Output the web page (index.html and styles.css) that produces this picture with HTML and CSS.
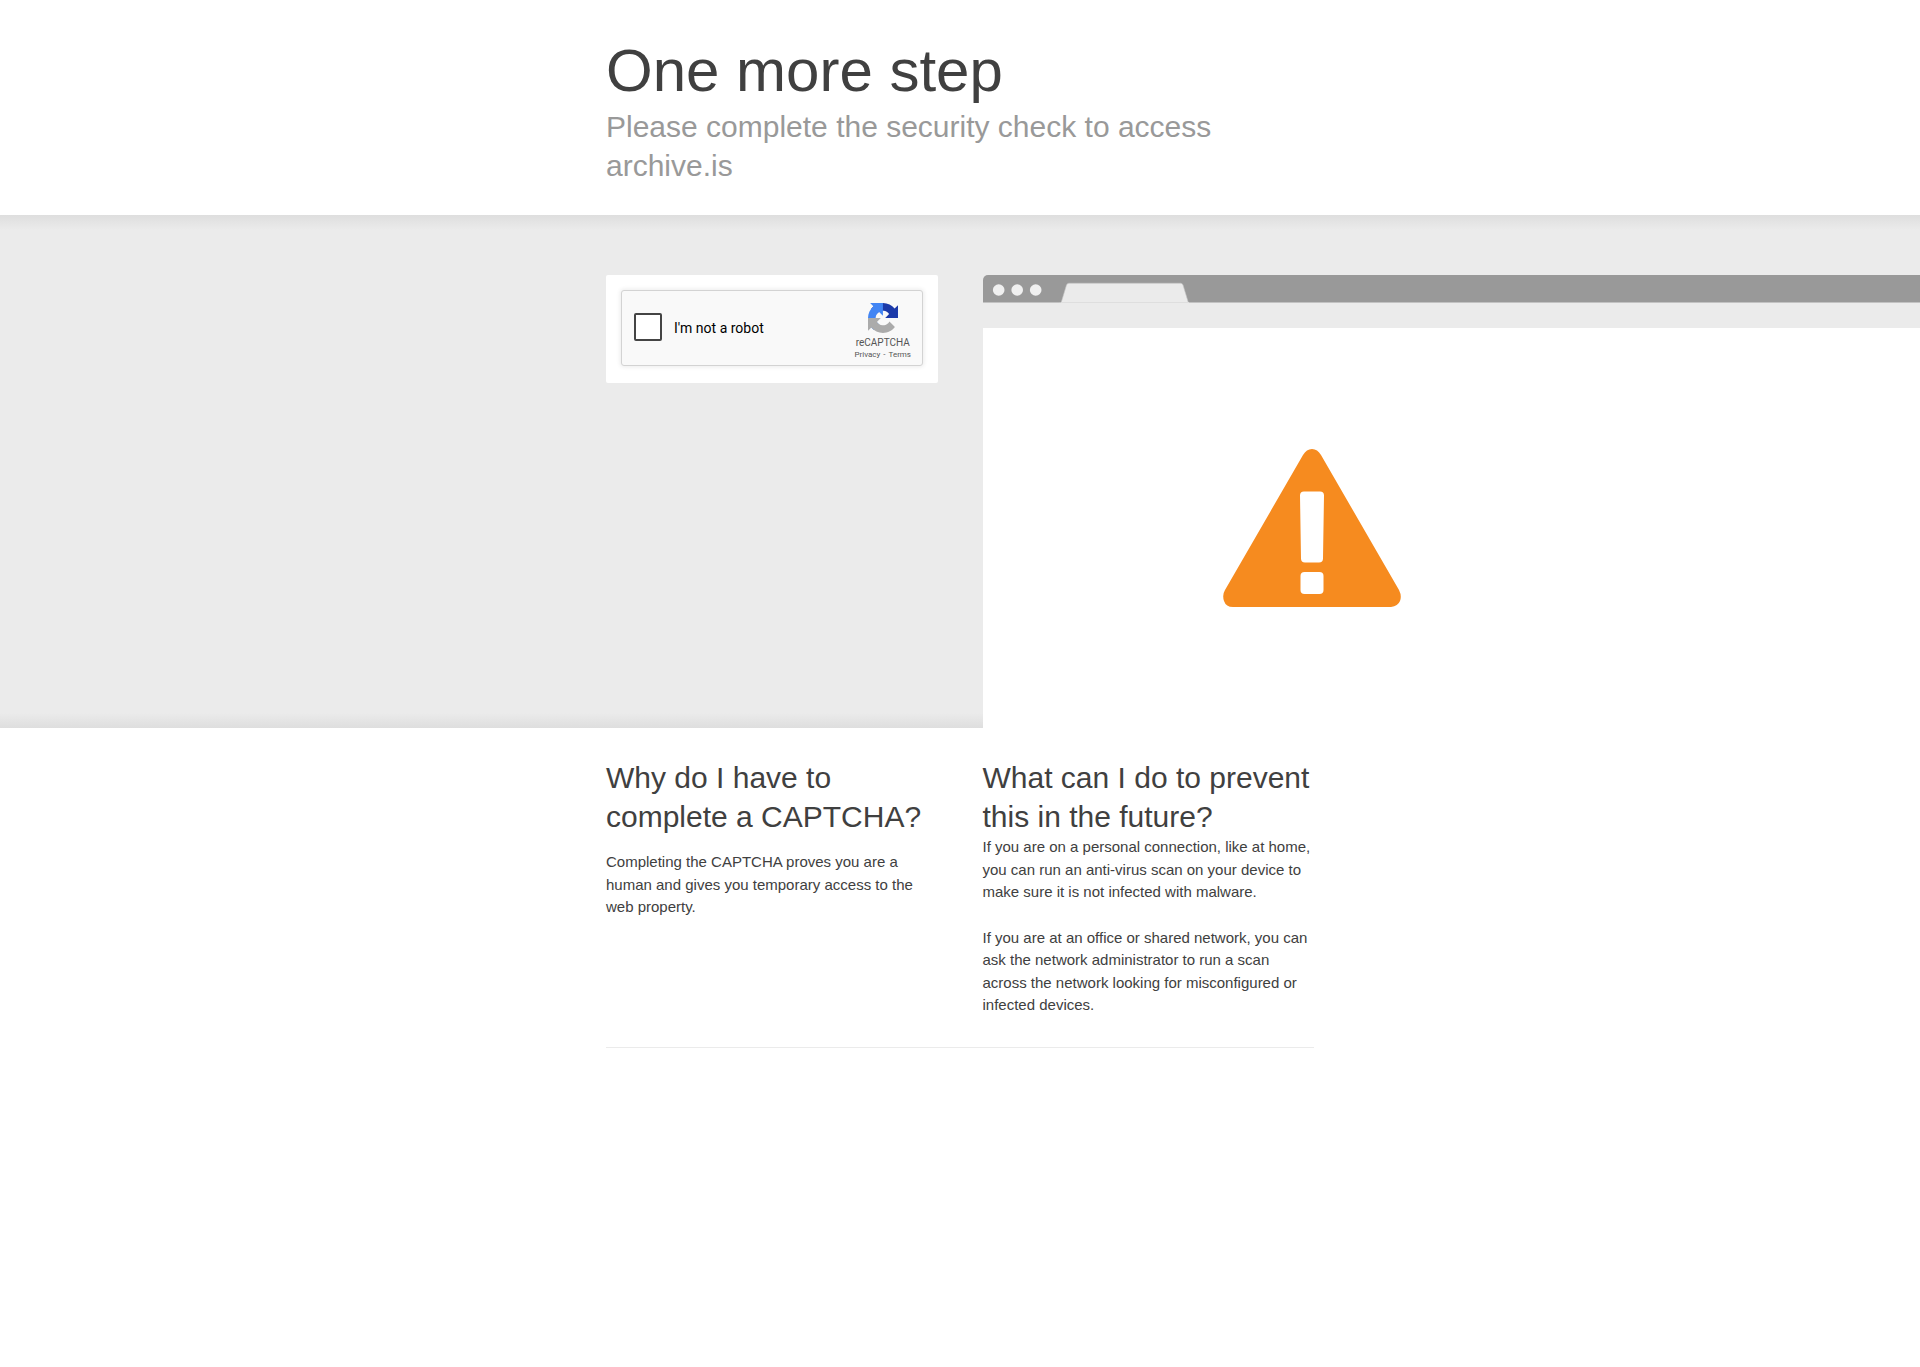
FILE: index.html
```html
<!DOCTYPE html>
<html lang="en">
<head>
  <meta charset="utf-8">
  <meta name="viewport" content="width=device-width, initial-scale=1">
  <title>One more step</title>
  <link rel="stylesheet" href="styles.css">
</head>
<body>
  <header class="header container">
    <h1>One more step</h1>
    <h2 class="subheadline">Please complete the security check to access archive.is</h2>
  </header>

  <main>
    <section class="challenge">
      <form class="card">
        <div class="captcha">
          <input class="captcha-check" type="checkbox" id="robot">
          <label class="captcha-label" for="robot">I'm not a robot</label>
          <div class="captcha-brand">
            <svg class="captcha-logo" viewBox="0 0 64 64" aria-hidden="true">
              <path fill="#1c3aa9" d="M64 31.955l-.033-1.37V4.687l-7.16 7.16C50.948 4.674 42.033.093 32.05.093c-10.4 0-19.622 4.96-25.458 12.64l11.736 11.86a15.55 15.55 0 0 1 4.754-5.334c2.05-1.6 4.952-2.906 8.968-2.906.485 0 .86.057 1.135.163 4.976.393 9.288 3.14 11.828 7.124l-8.307 8.307L64 31.953"/>
              <path fill="#4285f4" d="M31.862.094l-1.37.033H4.594l7.16 7.16C4.58 13.147 0 22.06 0 32.046c0 10.4 4.96 19.622 12.64 25.458L24.5 45.768a15.55 15.55 0 0 1-5.334-4.754c-1.6-2.05-2.906-4.952-2.906-8.968 0-.485.057-.86.163-1.135.393-4.976 3.14-9.288 7.124-11.828l8.307 8.307L31.86.095"/>
              <path fill="#ababab" d="M.001 32.045l.033 1.37v25.898l7.16-7.16c5.86 7.173 14.774 11.754 24.76 11.754 10.4 0 19.622-4.96 25.458-12.64l-11.736-11.86a15.55 15.55 0 0 1-4.754 5.334c-2.05 1.6-4.952 2.906-8.968 2.906-.485 0-.86-.057-1.135-.163-4.976-.393-9.288-3.14-11.828-7.124l8.307-8.307c-10.522.04-22.4.066-27.295-.005"/>
            </svg>
            <div class="captcha-name">reCAPTCHA</div>
            <div class="captcha-links"><a href="#privacy">Privacy</a><span>-</span><a href="#terms">Terms</a></div>
          </div>
        </div>
      </form>

      <div class="browser">
        <div class="browser-bar">
          <svg class="browser-tabs" viewBox="0 0 207 28" aria-hidden="true">
            <path fill="#c2c2c2" d="M0 27h207v1H0z"/>
            <g fill="#f0f0f0">
              <circle cx="15.7" cy="15" r="5.8"/>
              <circle cx="34.2" cy="15" r="5.8"/>
              <circle cx="52.7" cy="15" r="5.8"/>
            </g>
            <path fill="#ebebeb" stroke="#c6c6c6" stroke-width=".6" d="M76 28q2 0 2.500-1.500L83.500 10Q84.200 8.200 86 8.200H197.500Q199.400 8.200 200 10L205 26.500Q205.500 28 207 28z"/>
            <path fill="#dedede" d="M78 27h128v1H78z"/>
          </svg>
        </div>
        <div class="browser-page">
          <svg class="warning" viewBox="0 0 178 158" role="img" aria-label="Warning">
            <path fill="#f68b1f" d="M80 6Q83.500 0 89 0T98 6L176 141Q179 147 177 152T168 158H10Q3 158 1 152T2 141z"/>
            <path fill="#fff" d="M81 42.500h16q4 0 4 4l-1 63q0 4-4 4H82q-4 0-4-4l-1-63q0-4 4-4z"/>
            <rect fill="#fff" x="77.500" y="123" width="23" height="22" rx="4"/>
          </svg>
        </div>
      </div>
    </section>

    <div class="container">
      <div class="columns">
        <section>
          <h2>Why do I have to complete a CAPTCHA?</h2>
          <p class="spaced">Completing the CAPTCHA proves you are a human and gives you temporary access to the web property.</p>
        </section>
        <section>
          <h2>What can I do to prevent this in the future?</h2>
          <p>If you are on a personal connection, like at home, you can run an anti-virus scan on your device to make sure it is not infected with malware.</p>
          <p class="next">If you are at an office or shared network, you can ask the network administrator to run a scan across the network looking for misconfigured or infected devices.</p>
        </section>
      </div>
    </div>
  </main>
</body>
</html>
```

FILE: styles.css
```css
* {
  box-sizing: border-box;
}

body {
  margin: 0;
  background: #fff;
  color: #404040;
  font-family: "Liberation Sans", Arial, sans-serif;
  font-size: 15px;
  line-height: 1.5;
}

h1,
h2,
p {
  margin: 0;
  font-weight: 400;
}

h1 {
  font-size: 60px;
  line-height: 72px;
}

h2 {
  font-size: 30px;
  line-height: 39px;
}

.container {
  max-width: 708px;
  margin: 0 auto;
}

.header {
  padding: 35px 0 30px;
}

.subheadline {
  color: #999;
}

.challenge {
  display: grid;
  grid-template-columns: 332px 1fr;
  column-gap: 45px;
  align-items: start;
  padding: 60px 0 0 calc(50% - 354px);
  background:
    linear-gradient(to bottom, #dedede, #ebebeb) top / 100% 15px no-repeat,
    linear-gradient(to top, #dedede, #ebebeb) bottom / 100% 15px no-repeat,
    #ebebeb;
}

.card {
  padding: 15px 15px 17px;
  border-radius: 2px;
  background: #fff;
}

.captcha {
  display: flex;
  align-items: center;
  height: 76px;
  padding: 0 11px 0 12px;
  border: 1px solid #d3d3d3;
  border-radius: 3px;
  background: #f9f9f9;
  box-shadow: 0 0 4px 1px rgba(0, 0, 0, 0.08);
  color: #000;
  font-family: Roboto, sans-serif;
}

.captcha-check {
  appearance: none;
  width: 28px;
  height: 28px;
  margin: 0 12px 2px 0;
  border: 2px solid #444;
  border-radius: 2px;
  background: #fff;
}

.captcha-label {
  flex: 1;
  font-size: 14px;
  line-height: 18px;
}

.captcha-brand {
  padding-top: 8px;
  color: #555;
  text-align: center;
}

.captcha-logo {
  display: block;
  width: 30px;
  height: 30px;
  margin: 0 auto 4px;
}

.captcha-name {
  font-size: 10px;
  line-height: 12px;
}

.captcha-links {
  display: flex;
  justify-content: center;
  gap: 3px;
  font-size: 8px;
  line-height: 12px;
}

.captcha-links a {
  color: inherit;
  text-decoration: none;
}

.browser-bar {
  height: 28px;
  border-bottom: 1px solid #c2c2c2;
  border-radius: 5px 0 0 0;
  background: #999;
}

.browser-tabs {
  display: block;
  width: 207px;
  height: 28px;
}

.browser-page {
  height: 425px;
  padding: 121px 0 0 240px;
  border-top: 25px solid #ebebeb;
  background: #fff;
}

.warning {
  display: block;
  width: 178px;
  height: 158px;
}

.columns {
  display: grid;
  grid-template-columns: 1fr 1fr;
  column-gap: 45px;
  padding: 30px 0;
  border-bottom: 1px solid #ebebeb;
}

.spaced {
  margin-top: 15px;
}

.next {
  margin-top: 23px;
}

@media (max-width: 740px) {
  .header,
  .columns {
    padding-left: 15px;
    padding-right: 15px;
  }

  .challenge {
    grid-template-columns: 1fr;
    padding: 30px 15px;
  }

  .columns {
    grid-template-columns: 1fr;
    row-gap: 30px;
  }

  .browser {
    display: none;
  }
}
```
